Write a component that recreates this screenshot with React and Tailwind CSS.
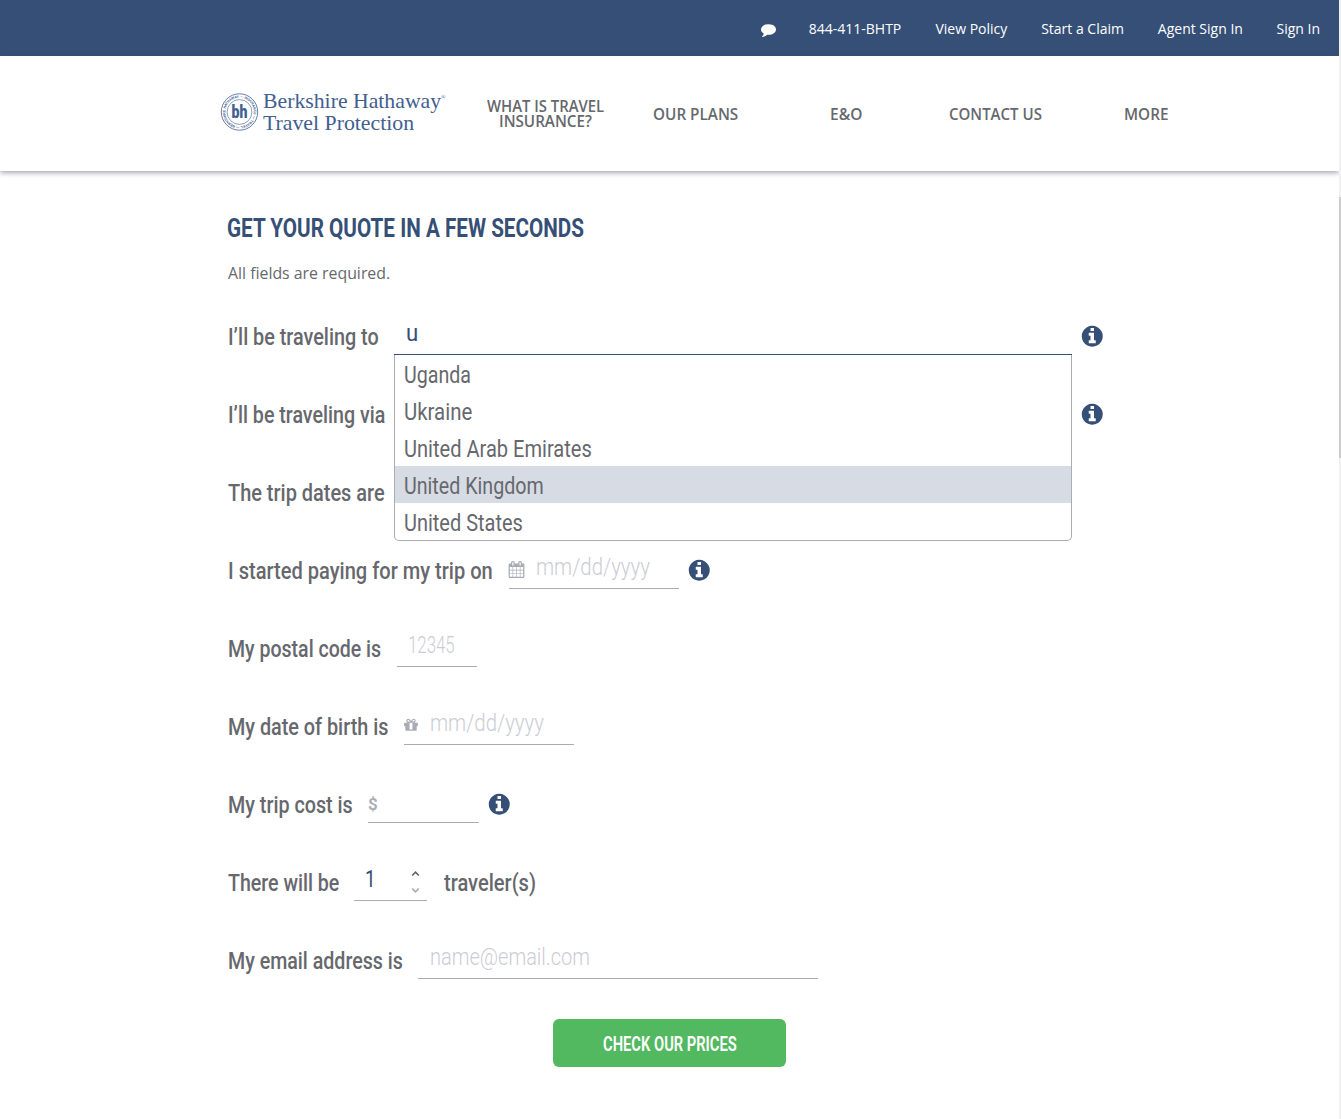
import React, { useLayoutEffect, useRef, useState } from "react";

const CONDENSED = "font-['Roboto',sans-serif]";

/* Condenses a run of text horizontally so that it fills `w` pixels. */
function Fit({ w, className = "", children }) {
  const ref = useRef(null);
  const [scale, setScale] = useState(1);
  useLayoutEffect(() => {
    setScale(w / ref.current.offsetWidth);
  }, [w, children]);
  return (
    <span className={`inline-block whitespace-pre ${className}`} style={{ width: w }}>
      <span ref={ref} className="inline-block origin-left" style={{ transform: `scaleX(${scale})` }}>
        {children}
      </span>
    </span>
  );
}

function Glyph({ d, className }) {
  return (
    <svg viewBox="0 0 1792 1792" fill="currentColor" className={`shrink-0 ${className}`} aria-hidden="true">
      <path d={d} />
    </svg>
  );
}

const COMMENT =
  "M1792 896q0 174-120 321.5t-326 233-450 85.5q-70 0-145-8-198 175-460 242-49 14-114 22-17 2-30.5-9t-17.5-29v-1q-3-4-.5-12t2-10 4.5-9.5l6-9 7-8.5 8-9q7-8 31-34.5t34.5-38 31-39.5 32.5-51 27-59 26-76q-157-89-247.5-220t-90.5-281q0-130 71-248.5t191-204.5 286-136.5 348-50.5q244 0 450 85.5t326 233 120 321.5z";
const INFO =
  "M1152 1376v-160q0-14-9-23t-23-9h-96v-512q0-14-9-23t-23-9h-320q-14 0-23 9t-9 23v160q0 14 9 23t23 9h96v320h-96q-14 0-23 9t-9 23v160q0 14 9 23t23 9h448q14 0 23-9t9-23zm-128-896v-160q0-14-9-23t-23-9h-192q-14 0-23 9t-9 23v160q0 14 9 23t23 9h192q14 0 23-9t9-23zm640 416q0 209-103 385.5t-279.5 279.5-385.5 103-385.5-103-279.5-279.5-103-385.5 103-385.5 279.5-279.5 385.5-103 385.5 103 279.5 279.5 103 385.5z";
const CALENDAR =
  "M192 1664h288v-288h-288v288zm352 0h320v-288h-320v288zm-352-352h288v-320h-288v320zm352 0h320v-320h-320v320zm-352-384h288v-288h-288v288zm736 736h320v-288h-320v288zm-384-736h320v-288h-320v288zm768 736h288v-288h-288v288zm-384-352h320v-320h-320v320zm-352-864v-288q0-13-9.5-22.5t-22.5-9.5h-64q-13 0-22.5 9.5t-9.5 22.5v288q0 13 9.5 22.5t22.5 9.5h64q13 0 22.5-9.5t9.5-22.5zm736 864h288v-320h-288v320zm-384-384h320v-288h-320v288zm384 0h288v-288h-288v288zm32-480v-288q0-13-9.5-22.5t-22.5-9.5h-64q-13 0-22.5 9.5t-9.5 22.5v288q0 13 9.5 22.5t22.5 9.5h64q13 0 22.5-9.5t9.5-22.5zm384-64v1280q0 52-38 90t-90 38h-1408q-52 0-90-38t-38-90v-1280q0-52 38-90t90-38h128v-96q0-66 47-113t113-47h64q66 0 113 47t47 113v96h384v-96q0-66 47-113t113-47h64q66 0 113 47t47 113v96h128q52 0 90 38t38 90z";
const GIFT =
  "M1056 1356v-716h-320v716q0 25 18 38.5t46 13.5h192q28 0 46-13.5t18-38.5zm-456-844h195l-126-161q-26-31-69-31-40 0-68 28t-28 68 28 68 68 28zm688-96q0-40-28-68t-68-28q-43 0-69 31l-125 161h194q40 0 68-28t28-68zm376 256v320q0 14-9 23t-23 9h-96v416q0 40-28 68t-68 28h-1088q-40 0-68-28t-28-68v-416h-96q-14 0-23-9t-9-23v-320q0-14 9-23t23-9h440q-93 0-158.5-65.5t-65.5-158.5 65.5-158.5 158.5-65.5q107 0 168 77l128 165 128-165q61-77 168-77 93 0 158.5 65.5t65.5 158.5-65.5 158.5-158.5 65.5h440q14 0 23 9t9 23z";

function Info({ className }) {
  return <Glyph d={INFO} className={`mt-[13px] size-[24.5px] text-[#364f77] ${className}`} />;
}

function Label({ w, children }) {
  return (
    <Fit w={w} className="shrink-0 text-[24px] leading-[52px] font-medium text-[#66686d]">
      {children}
    </Fit>
  );
}

function Row({ children }) {
  return <div className="relative flex h-11 items-start">{children}</div>;
}

const FIELD = "flex h-11 shrink-0 border-b border-[#a9abb6] text-[24px] leading-[44px]";
const HINT = "font-light text-[#cbcdd4]";

function Logo() {
  return (
    <div className="mt-[36px] ml-[220px] flex h-[42px] w-[226px] text-[#41608f]">
      <svg viewBox="0 0 40 40" className="size-10 shrink-0">
        <defs>
          <path id="ring" d="M19.5 34.3a14.3 14.3 0 1 1 .01 0" />
        </defs>
        <g fill="none" stroke="currentColor">
          <circle cx="19.5" cy="20" r="18.2" strokeWidth="0.8" />
          <circle cx="19.5" cy="20" r="12.4" strokeWidth="0.6" />
        </g>
        <text fill="currentColor" fontSize="3.5" fontWeight="700" className="font-['Liberation_Sans',sans-serif]">
          <textPath href="#ring" textLength="88">— BERKSHIRE HATHAWAY — INSURANCE — TRAVEL</textPath>
        </text>
        <text
          x="11.6"
          y="26"
          textLength="16"
          lengthAdjust="spacingAndGlyphs"
          fill="currentColor"
          fontSize="17.5"
          fontWeight="900"
          className="font-['Roboto',sans-serif]"
        >
          bh
        </text>
      </svg>
      <div className="-mt-px ml-[3px] flex flex-col font-['Liberation_Serif',serif] text-[21.5px] leading-[21.5px]">
        <div className="flex">
          <Fit w={178}>Berkshire Hathaway</Fit>
          <span className="text-[6px] leading-[12px]">®</span>
        </div>
        <Fit w={151}>Travel Protection</Fit>
      </div>
    </div>
  );
}

const TOP_LINKS = [
  ["844-411-BHTP", 93],
  ["View Policy", 72],
  ["Start a Claim", 83],
  ["Agent Sign In", 85],
  ["Sign In", 44],
];

const NAV = [
  [["WHAT IS TRAVEL", 117], ["INSURANCE?", 93]],
  [["OUR PLANS", 85]],
  [["E&O", 32]],
  [["CONTACT US", 93]],
  [["MORE", 44]],
];

const COUNTRIES = [
  ["Uganda", 67],
  ["Ukraine", 68],
  ["United Arab Emirates", 188],
  ["United Kingdom", 140],
  ["United States", 119],
];

export default function App() {
  return (
    <div className="flex h-[1119px] w-[1341px] overflow-hidden bg-white">
      <div className="flex w-[1339px] flex-col">
        <div className="flex h-14 shrink-0 items-center justify-end gap-[33.7px] bg-[#364f77] pr-[18.5px] font-['Open_Sans',sans-serif] text-[14px] leading-5 text-white">
          <Glyph d={COMMENT} className="mt-[2px] -mr-px size-[15px]" />
          {TOP_LINKS.map(([t, w]) => (
            <Fit key={t} w={w} className="mt-[2px]">
              {t}
            </Fit>
          ))}
        </div>

        <header className="flex h-[115px] shrink-0 shadow-[0_2px_5px_rgba(54,64,88,0.45)]">
          <Logo />
          <nav className="ml-[24.5px] flex h-full font-['Open_Sans',sans-serif] text-[16px] leading-[15px] font-semibold text-[#66686d]">
            {NAV.map((lines) => (
              <div key={lines[0][0]} className="flex w-[150px] flex-col items-center justify-center pt-[1px]">
                {lines.map(([t, w]) => (
                  <Fit key={t} w={w} className="h-[15px]">
                    {t}
                  </Fit>
                ))}
              </div>
            ))}
          </nav>
        </header>

        <main className={`flex flex-col pl-[228px] ${CONDENSED}`}>
          <h1 className="mt-[41px] -ml-px h-8 text-[26px] leading-8 font-bold text-[#364f77]">
            <Fit w={357}>GET YOUR QUOTE IN A FEW SECONDS</Fit>
          </h1>
          <p className="mt-[17px] h-6 font-['Open_Sans',sans-serif] text-[16px] leading-6 text-[#66686d]">
            <Fit w={162.5}>All fields are required.</Fit>
          </p>

          <form className="mt-[26px] flex flex-col gap-[34px]">
            <div className="relative z-10">
              <Row>
                <Label w={151}>I’ll be traveling to</Label>
                <div className="ml-[15px] flex h-11 w-[678px] shrink-0 border-b border-[#364f77] pl-3 text-[24px] leading-[44px] text-[#364f77]">
                  <Fit w={12}>u</Fit>
                </div>
                <Info className="ml-[7.5px]" />
              </Row>
              <ul className="absolute top-11 left-[166px] w-[678px] rounded-b-[5px] border border-t-0 border-[#a9abb6] bg-white text-[24px] leading-[41px] text-[#66686d]">
                {COUNTRIES.map(([t, w]) => (
                  <li key={t} className={`h-[37px] pl-[8.5px] ${t === "United Kingdom" ? "bg-[#d7dbe4]" : ""}`}>
                    <Fit w={w}>{t}</Fit>
                  </li>
                ))}
              </ul>
            </div>
            <Row>
              <Label w={157}>I’ll be traveling via</Label>
              <Info className="ml-[694.5px]" />
            </Row>
            <Row>
              <Label w={157}>The trip dates are</Label>
            </Row>
            <Row>
              <Label w={265}>I started paying for my trip on</Label>
              <div className={`${FIELD} ml-[16px] w-[170px]`}>
                <Glyph d={CALENDAR} className="mt-[16px] -ml-px size-[17px] text-[#a9abb6]" />
                <Fit w={114} className={`ml-[11px] ${HINT}`}>
                  mm/dd/yyyy
                </Fit>
              </div>
              <Info className="ml-[8px]" />
            </Row>
            <Row>
              <Label w={153}>My postal code is</Label>
              <div className={`${FIELD} ml-[16px] w-[80px] pl-[11px]`}>
                <Fit w={47} className={HINT}>
                  12345
                </Fit>
              </div>
            </Row>
            <Row>
              <Label w={160}>My date of birth is</Label>
              <div className={`${FIELD} ml-[16px] w-[170px]`}>
                <Glyph d={GIFT} className="mt-[16px] -ml-px size-[16px] text-[#a9abb6]" />
                <Fit w={114} className={`ml-[11px] ${HINT}`}>
                  mm/dd/yyyy
                </Fit>
              </div>
            </Row>
            <Row>
              <Label w={125}>My trip cost is</Label>
              <div className={`${FIELD} ml-[15px] w-[111px]`}>
                <Fit w={10} className="text-[17px] leading-[50px] font-semibold text-[#a9abb6]">
                  $
                </Fit>
              </div>
              <Info className="ml-[7.5px]" />
            </Row>
            <Row>
              <Label w={111}>There will be</Label>
              <div className={`${FIELD} ml-[15px] w-[73px] justify-between pr-[7px] pl-[11px] text-[#364f77]`}>
                <Fit w={11}>1</Fit>
                <svg viewBox="0 0 9 26" className="mt-[12px] h-[26px] w-[9px]" fill="none" strokeWidth="1.7">
                  <path d="M1.2 6.5 4.5 3.2 7.8 6.5" stroke="#626469" />
                  <path d="M1.2 19.5 4.5 22.8 7.8 19.5" stroke="#a9abb6" />
                </svg>
              </div>
              <div className="ml-[16.5px]">
                <Label w={92}>traveler(s)</Label>
              </div>
            </Row>
            <Row>
              <Label w={175}>My email address is</Label>
              <div className={`${FIELD} ml-[15px] w-[400px] pl-[12px]`}>
                <Fit w={160} className={HINT}>
                  name@email.com
                </Fit>
              </div>
            </Row>
          </form>

          <button className="mt-[40px] ml-[325px] flex h-12 w-[233px] items-center justify-center rounded-[6px] bg-[#53b961] pt-[2px] text-[20px] leading-6 font-semibold text-white">
            <Fit w={134}>CHECK OUR PRICES</Fit>
          </button>
        </main>
      </div>
      <div className="w-[2px] bg-[#f0f0f0] pt-[197px]">
        <div className="h-[261px] bg-[#cdcdcd]" />
      </div>
    </div>
  );
}
